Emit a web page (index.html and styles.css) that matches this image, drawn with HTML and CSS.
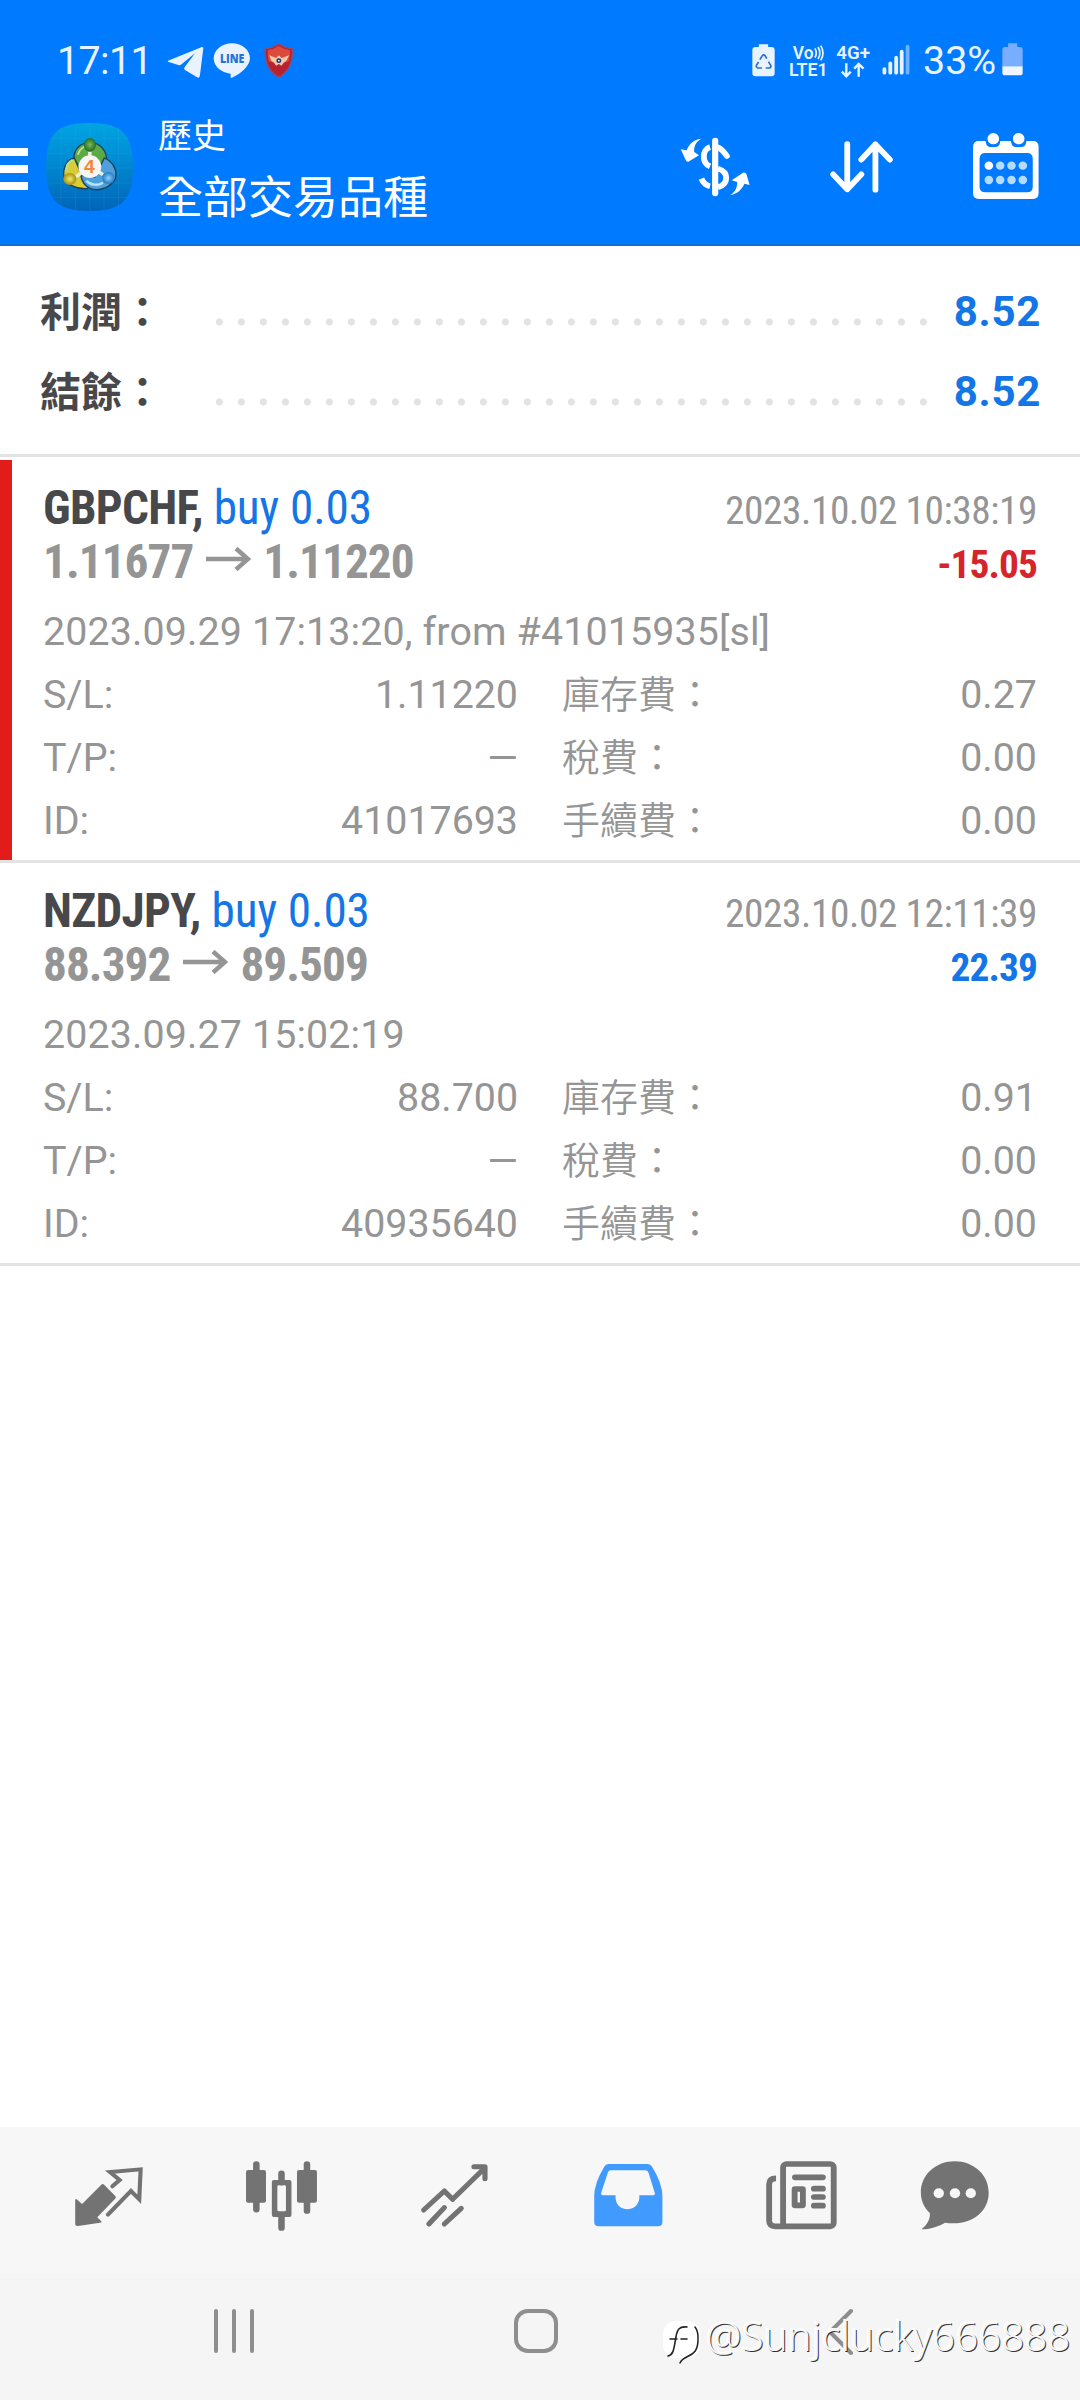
FILE: index.html
```html
<!DOCTYPE html>
<html lang="zh-Hant">
<head>
<meta charset="utf-8">
<title>歷史</title>
<link rel="stylesheet" href="styles.css">
</head>
<body>
<header class="header">
  <div class="status">
    <span class="clock">17:11</span>
    <svg class="st-telegram" viewBox="485 125 110 120" preserveAspectRatio="none"><path d="M488 184 586 143q5-1 4 5l-10 82q-2 7-8 4l-35-22q-5-4-1-8l30-42-39 33q-4 4-9 2l-28-9q-5-2-2-4z" fill="#e9f3ff"/></svg>
    <svg class="st-line" viewBox="620 125 110 120" preserveAspectRatio="none"><path d="M675 132c29 0 52 20 52 45 0 23-28 48-52 58-6 2-3-6-4-12-27-2-49-22-49-46 0-25 24-45 53-45z" fill="#e9f3ff"/><text x="640" y="192" font-size="35" textLength="71" lengthAdjust="spacingAndGlyphs" fill="#2673d8" class="line-word">LINE</text></svg>
    <svg class="st-shield" viewBox="765 125 93 120" preserveAspectRatio="none"><path d="M811 133q17 13 39 15 4 60-39 86-44-26-39-86 22-2 39-15z" fill="#b8222e" stroke="#8f4a72" stroke-width="4"/><path d="M811 140q14 10 32 12 2 16-3 34l-29 8-29-8q-5-18-3-34 18-2 32-12z" fill="#dc4a3c"/><path d="M783 168l20 8 8-8 8 8 22-8-8 16-8 6-6 9-8-5-8 5-6-9-8-6z" fill="#f0c9a8"/><circle cx="811" cy="184" r="7" fill="#1d2c7a"/><circle cx="811" cy="184" r="2.500" fill="#fff"/></svg>
    <div class="status-right">
      <svg width="23" height="40" viewBox="617 125 67 120" preserveAspectRatio="none"><path d="M637 135h27v8h10q9 0 9 9v70q0 9-9 9h-47q-9 0-9-9v-70q0-9 9-9h10z" fill="#e9f3ff"/><g fill="none" stroke="#2b6fd0" stroke-width="5"><path d="M640 181l7-12q4-5 8 0l5 9M665 187l7 12q1 6-5 7h-10M646 206h-12q-6-2-4-8l6-10"/></g></svg>
      <svg width="39" height="40" viewBox="724 125 113 120" preserveAspectRatio="none" class="net"><text x="735" y="179" font-size="56" textLength="60" lengthAdjust="spacingAndGlyphs">Vo</text><path d="M799 147q8 14 0 28M808 143q11 18 0 36M816 139q13 22 0 44" fill="none" stroke="#e9f3ff" stroke-width="5"/><text x="724" y="230" font-size="53" textLength="112" lengthAdjust="spacingAndGlyphs">LTE1</text></svg>
      <svg width="34" height="40" viewBox="858 125 99 120" preserveAspectRatio="none" class="net"><text x="859" y="180" font-size="56" textLength="98" lengthAdjust="spacingAndGlyphs">4G+</text><path d="M888 192v38M875 217l13 14 13-14M924 232v-38M911 208l13-14 14 14" fill="none" stroke="#e9f3ff" stroke-width="7"/></svg>
      <svg width="28" height="40" viewBox="992 125 81 120" preserveAspectRatio="none" fill="none" stroke-width="11" stroke-linecap="round"><path d="M999 209v11M1016 192v28M1033 175v45M1049 157v63" stroke="#e9f3ff"/><path d="M1066 142v78" stroke="#6fb0ff"/></svg>
      <span class="percent">33%</span>
      <svg width="21" height="40" viewBox="1341 125 62 120" preserveAspectRatio="none"><path d="M1359 132h27v11h8q8 0 8 8v50h-60v-50q0-8 8-8h9z" fill="#78adff"/><path d="M1342 201h60v19q0 8-8 8h-44q-8 0-8-8z" fill="#f0f5ff"/></svg>
    </div>
  </div>
  <div class="appbar">
    <div class="menu"><i></i><i></i><i></i></div>
    <svg class="logo" viewBox="135 369 252 264" preserveAspectRatio="none">
      <defs>
        <linearGradient id="sky" x1="0" y1="0" x2="0" y2="1"><stop offset="0" stop-color="#00a5e2"/><stop offset=".5" stop-color="#0086d0"/><stop offset="1" stop-color="#0064b8"/></linearGradient>
        <radialGradient id="gr"><stop offset="0" stop-color="#7fb765"/><stop offset="1" stop-color="#20701f"/></radialGradient>
        <radialGradient id="ye"><stop offset="0" stop-color="#f2ea62"/><stop offset="1" stop-color="#a89018"/></radialGradient>
        <radialGradient id="bl"><stop offset="0" stop-color="#8cd1fa"/><stop offset="1" stop-color="#2478c4"/></radialGradient>
      </defs>
      <path d="M261 369c95 0 126 34 126 132s-31 132-126 132-126-34-126-132 31-132 126-132z" fill="url(#sky)"/>
      <path d="M178 380v242M220 372v258M262 370v262M303 372v258M345 380v242M148 415h226M138 460h246M136 504h250M138 549h246M148 592h226" stroke="#4db4e4" stroke-opacity=".22" stroke-width="2"/>
      <g stroke="#1d4258" stroke-width="4">
        <path d="M262 428c32 0 50 26 49 58l-16 24-64-8-15-28c0-26 18-46 46-46z" fill="#5caa45"/>
        <path d="M217 474c-22 6-34 30-30 56 8 24 34 38 68 36l12-24-34-30z" fill="#d8cd35"/>
        <path d="M304 474c26 12 38 36 32 62-12 24-44 40-72 30-16-8-26-24-28-40l40 6z" fill="#4da0dc"/>
      </g>
      <path d="M227 464c6-20 22-28 36-28M196 512c-4-16 4-26 16-32" fill="none" stroke="#b9df93" stroke-width="6"/>
      <path d="M300 548c-16 10-36 8-48-6" fill="none" stroke="#b9e4fb" stroke-width="7"/>
      <path d="M262 456v16M222 530l14-10M300 524l-12-8" stroke="#e6f2df" stroke-width="10"/>
      <ellipse cx="262" cy="434" rx="18" ry="20" fill="url(#gr)"/>
      <ellipse cx="204" cy="537" rx="19" ry="18" fill="url(#ye)"/>
      <ellipse cx="316" cy="534" rx="18" ry="18" fill="url(#bl)"/>
      <ellipse cx="262" cy="500" rx="33" ry="34" fill="#f7f5f2"/>
      <text x="261" y="520" text-anchor="middle" font-size="56" class="four">4</text>
    </svg>
    <div class="titles"><span class="sub">歷史</span><span class="main">全部交易品種</span></div>
    <div class="actions">
      <svg width="74" height="72" viewBox="400 390 215 216" preserveAspectRatio="none"><path d="M508 422v158" stroke="#fff" stroke-width="18" stroke-linecap="round"/><g fill="none" stroke="#fff" stroke-width="17"><path d="M493 441c-24 8-24 48 0 58"/><path d="M516 442c10 4 18 14 26 26" stroke-linecap="round"/><path d="M516 506c32 10 32 46 0 56"/><path d="M493 559c-12-3-20-11-25-23" stroke-linecap="butt"/></g><path d="M468 416c-16 9-22 22-21 40l14 10-31 19q-6 1-8-6l-14-31 17 3c8-20 20-32 43-35zM552 585c16-10 20-24 20-39l-16-5 33-23q7-2 10 5l9 32-15-4c-8 18-20 30-41 34z" fill="#fff"/></svg>
      <svg width="67" height="72" viewBox="835 390 195 216" preserveAspectRatio="none" fill="none" stroke="#fff" stroke-width="17" stroke-linecap="round" stroke-linejoin="round"><path d="M891 432v136M850 523l41 45 41-45M973 569v-136M932 479l41-46 42 46"/></svg>
      <svg width="70" height="72" viewBox="1250 390 204 216" preserveAspectRatio="none"><path d="M1273 423h157q17 0 17 17v140q0 17-17 17h-157q-17 0-17-17v-140q0-17 17-17zM1292 459q-17 0-17 17v84q0 17 17 17h121q17 0 17-17v-84q0-17-17-17z" fill="#fff" fill-rule="evenodd"/><path d="M1292 416q0 25 14 25h16q14 0 14-25zM1366 416q0 25 14 25h18q14 0 14-25z" fill="#007aff"/><circle cx="1315" cy="416" r="17" fill="#fff"/><circle cx="1389" cy="416" r="17" fill="#fff"/><circle cx="1302" cy="497" r="12.500" fill="#fff"/><g fill="#b5dcff"><circle cx="1335" cy="497" r="12.500"/><circle cx="1368" cy="497" r="12.500"/><circle cx="1401" cy="497" r="12.500"/><circle cx="1302" cy="540" r="12.500"/><circle cx="1335" cy="540" r="12.500"/><circle cx="1368" cy="540" r="12.500"/><circle cx="1401" cy="540" r="12.500"/></g></svg>
    </div>
  </div>
</header>

<section class="summary">
  <div class="sum-row"><span class="sum-label">利潤：</span><span class="dots"></span><span class="sum-value">8.52</span></div>
  <div class="sum-row"><span class="sum-label">結餘：</span><span class="dots"></span><span class="sum-value">8.52</span></div>
</section>

<main class="orders">
  <article class="order loss">
    <div class="line"><span><b class="symbol">GBPCHF,</b> <span class="side">buy 0.03</span></span><span class="time">2023.10.02 10:38:19</span></div>
    <div class="line prices"><span>1.11677<svg class="arrow" viewBox="0 0 45 24"><path d="M0 12h42M30 1.500l12 10.500-12 10.500"/></svg>1.11220</span><span class="profit">-15.05</span></div>
    <div class="detail">2023.09.29 17:13:20, from #41015935[sl]</div>
    <div class="fields">
      <div class="field"><span>S/L:</span><span>1.11220</span></div><div class="field"><span class="cjk">庫存費：</span><span>0.27</span></div>
      <div class="field"><span>T/P:</span><span class="dash">—</span></div><div class="field"><span class="cjk">稅費：</span><span>0.00</span></div>
      <div class="field"><span>ID:</span><span>41017693</span></div><div class="field"><span class="cjk">手續費：</span><span>0.00</span></div>
    </div>
  </article>
  <article class="order gain">
    <div class="line"><span><b class="symbol">NZDJPY,</b> <span class="side">buy 0.03</span></span><span class="time">2023.10.02 12:11:39</span></div>
    <div class="line prices"><span>88.392<svg class="arrow" viewBox="0 0 45 24"><path d="M0 12h42M30 1.500l12 10.500-12 10.500"/></svg>89.509</span><span class="profit">22.39</span></div>
    <div class="detail">2023.09.27 15:02:19</div>
    <div class="fields">
      <div class="field"><span>S/L:</span><span>88.700</span></div><div class="field"><span class="cjk">庫存費：</span><span>0.91</span></div>
      <div class="field"><span>T/P:</span><span class="dash">—</span></div><div class="field"><span class="cjk">稅費：</span><span>0.00</span></div>
      <div class="field"><span>ID:</span><span>40935640</span></div><div class="field"><span class="cjk">手續費：</span><span>0.00</span></div>
    </div>
  </article>
</main>

<nav class="tabs">
  <svg viewBox="199 140 232.3 240" preserveAspectRatio="none"><path d="M217 268q2-4 6 0l14 13 55-57q5-5 9-1l33 35q3 4-1 7l-52 56 11 11q4 5-3 5l-64 10q-8 1-8-6z" fill="#737373"/><path d="M325 228l21-19-28-24 89-8-4 90-24-25-67 71" fill="none" stroke="#737373" stroke-width="12" stroke-linecap="round"/></svg>
  <svg viewBox="701.350 140 232.3 240" preserveAspectRatio="none" fill="#737373"><rect x="713" y="179" width="58" height="98" rx="6"/><rect x="861" y="179" width="58" height="98" rx="6"/><path d="M743 162v135M890 162v139M816 190v26M816 318v34" stroke="#737373" stroke-width="19" stroke-linecap="round"/><path d="M794 209h45q6 0 6 6v99q0 6-6 6h-45q-6 0-6-6v-99q0-6 6-6zM808 225q-4 0-4 4v69q0 5 4 5h17q4 0 4-5v-69q0-4-4-4z" fill-rule="evenodd"/></svg>
  <svg viewBox="1203.800 140 232.3 240" preserveAspectRatio="none" fill="none" stroke="#737373" stroke-width="15" stroke-linecap="round" stroke-linejoin="round"><path d="M1229 299l60-57 24 25 91-92M1375 169h32v36M1244 341l45-49M1289 341l49-47"/></svg>
  <svg viewBox="137.950 140 232.3 240" preserveAspectRatio="none"><path d="M198 161h113q9 0 13 8 30 50 30 88v78q0 13-13 13h-172q-13 0-13-13v-78q0-38 29-88 4-8 13-8zM204 180q-6 0-8 6l-20 62q-1 7 5 7h37v9c3 44 65 44 69 0v-9h39q7 0 6-7l-18-60q-2-8-9-8z" fill="#419bff" fill-rule="evenodd"/></svg>
  <svg viewBox="640.350 140 232.3 240" preserveAspectRatio="none" fill="none" stroke="#737373" stroke-width="17"><rect x="704.500" y="161" width="147" height="187" rx="10"/><path d="M684 204q-20 0-20 18v108q0 18 18 18h30"/><path d="M739 201h81M794 235h26M794 260h26M794 286h26" stroke-linecap="round"/><rect x="738" y="236" width="24" height="49" rx="1"/></svg>
  <svg viewBox="1089 140 232.3 240" preserveAspectRatio="none"><path d="M1204 153c55 0 99 40 99 94 0 58-52 102-127 90-20 12-42 20-68 20 16-14 26-30 24-49-16-16-26-37-26-61 0-54 44-94 98-94z" fill="#737373"/><g fill="#f7f7f7"><circle cx="1158" cy="249" r="15"/><circle cx="1205" cy="249" r="15"/><circle cx="1251" cy="249" r="15"/></g></svg>
</nav>
<footer class="sysnav">
  <svg width="40" height="44" viewBox="0 0 40 44"><path d="M2 2v40M20 2v40M38 2v40"/></svg>
  <svg width="44" height="44" viewBox="0 0 44 44"><rect x="2" y="2" width="40" height="40" rx="12"/></svg>
  <svg width="26" height="46" viewBox="0 0 26 46"><path d="M24 2 3 23l21 21"/></svg>
  <div class="watermark">
    <svg width="40" height="46" viewBox="0 0 40 46"><rect x="1" y="1" width="37" height="37" rx="13" fill="#fff"/><path d="M25 7c-8-1-10 3-11 10-2 10-2 18-8 19M8 19h7M19 19h6" fill="none" stroke="#222" stroke-width="1.600"/><path d="M18 43c4-10 19-3 18-26q0-6-3-10" fill="none" stroke="#222" stroke-width="1.500"/></svg>
    <span>@Sunjclucky666888</span>
  </div>
</footer>
</body>
</html>
```
FILE: styles.css
```css
* { box-sizing: border-box; }
body {
  margin: 0;
  width: 1080px;
  height: 2400px;
  display: flex;
  flex-direction: column;
  background: #fff;
  color: #959595;
  font-family: Roboto, "Noto Sans CJK TC", sans-serif;
  overflow: hidden;
}
svg { display: block; flex: none; }

.header {
  height: 246px;
  flex: none;
  background: #007aff;
  border-bottom: 2px solid #146fd0;
  color: #fff;
}
.status {
  height: 120px;
  padding: 41px 57px 0 57px;
  display: grid;
  grid-template-columns: 110px 46px 50px 32px 1fr;
  color: #e9f3ff;
}
.status svg { height: 40px; }
.st-telegram { width: 38px; }
.st-line { width: 38px; }
.st-shield { width: 32px; }
.clock, .percent { font-size: 39.4px; line-height: 40px; white-space: nowrap; }
.clock { letter-spacing: -0.6px; }
.line-word { font-family: "Open Sans", sans-serif; font-weight: 800; }
.net { font-family: Roboto, sans-serif; font-weight: 600; fill: #e9f3ff; }
.status-right {
  justify-self: end;
  display: grid;
  grid-template-columns: 37px 47px 46px 41px 79px 21px;
}

.appbar { height: 124px; display: flex; align-items: flex-start; }
.menu { width: 46px; padding-top: 28px; display: flex; flex-direction: column; gap: 9px; }
.menu i { width: 28px; height: 8px; background: #fff; }
.logo { width: 87px; height: 88px; margin-top: 3px; }
.four { font-family: "Liberation Sans", sans-serif; font-weight: 700; fill: #f0883a; }
.titles { margin-left: 25px; width: 520px; display: flex; flex-direction: column; font-family: "Noto Sans CJK TC", sans-serif; }
.sub { font-size: 34px; line-height: 44px; height: 44px; margin-top: -8px; }
.main { font-size: 45px; line-height: 60px; margin-top: 9px; }
.actions { padding-top: 10px; display: grid; grid-template-columns: 150px 143px 70px; }

.summary {
  height: 211px;
  flex: none;
  padding: 25px 39px 0 40px;
  border-bottom: 3px solid #e3e3e3;
}
.sum-row { display: flex; height: 80px; align-items: center; }
.sum-label {
  width: 175px;
  padding-bottom: 5px;
  color: #48484b;
  font-size: 41px;
  font-weight: 700;
  font-family: "Noto Sans CJK TC", sans-serif;
}
.dots {
  width: 726px;
  height: 8px;
  margin-top: 22px;
  background: radial-gradient(circle at 4.400px 4px, #e3e3e3 3.200px, transparent 4px) 0 0 / 22px 8px;
}
.sum-value { margin-left: auto; color: #1475e6; font-size: 42px; font-weight: 700; letter-spacing: 0.7px; }

.orders { padding-top: 3px; flex: 1; }
.order { height: 403px; border-bottom: 3px solid #e3e3e3; padding: 21px 43px 0; position: relative; }
.order.loss::before { content: ""; position: absolute; left: 0; top: 0; width: 12px; height: 400px; background: #e21b1b; }
.line {
  display: flex;
  justify-content: space-between;
  align-items: baseline;
  height: 54px;
  line-height: 54px;
  font-family: "Roboto Condensed", Roboto, sans-serif;
  font-size: 47.25px;
  white-space: nowrap;
}
.symbol { color: #48484b; letter-spacing: -0.7px; }
.side { color: #1475e6; letter-spacing: -0.1px; }
.time { font-size: 39.375px; letter-spacing: -0.43px; }
.prices { font-weight: 700; color: #959595; letter-spacing: -0.95px; }
.arrow {
  display: inline-block;
  width: 45px;
  height: 24px;
  margin: 0 12px 0 13px;
  fill: none;
  stroke: #959595;
  stroke-width: 4.500px;
  vertical-align: 7px;
}
.profit { font-size: 39.375px; color: #1475e6; letter-spacing: -0.9px; }
.loss .profit { color: #d5242a; }
.detail { margin-top: 12px; height: 62px; line-height: 62px; font-size: 39.375px; letter-spacing: 0.13px; white-space: nowrap; }
.fields { display: grid; grid-template-columns: 475px 475px; column-gap: 44px; font-size: 39.375px; }
.field { height: 63px; line-height: 63px; display: flex; justify-content: space-between; }
.cjk { margin-top: -3px; font-size: 38px; font-family: "Noto Sans CJK TC", sans-serif; font-weight: 350; }

.tabs {
  height: 146px;
  flex: none;
  padding: 30px 0 0 22px;
  background: #f7f7f7;
  display: grid;
  grid-template-columns: repeat(5, 173px) 136px;
  justify-items: center;
  align-items: start;
}
.tabs svg { width: 80px; height: 80px; }
.sysnav {
  height: 127px;
  flex: none;
  position: relative;
  padding: 36px 0 0 214px;
  background: #f5f5f5;
  display: grid;
  grid-template-columns: 300px 313px 26px;
  align-items: start;
  fill: none;
  stroke: #8e8e8e;
  stroke-width: 4px;
  stroke-linecap: round;
}
.watermark { position: absolute; left: 662px; top: 47px; display: flex; stroke: none; }
.watermark span {
  margin: -6px 0 0 4px;
  font: 300 40px/44px "Noto Sans", sans-serif;
  letter-spacing: 0.2px;
  color: #f7f7f7;
  text-shadow: 1px 1px 0 #333, -1px -1px 0 #fff;
}
```
